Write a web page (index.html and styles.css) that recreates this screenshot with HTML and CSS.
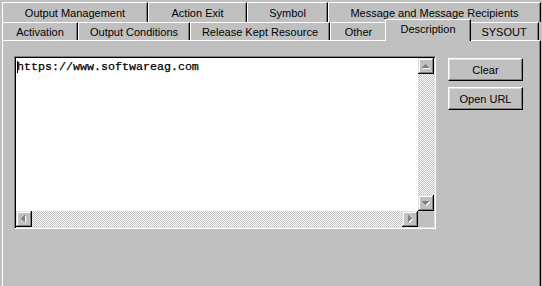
FILE: index.html
```html
<!DOCTYPE html>
<html>
<head>
<meta charset="utf-8">
<link rel="stylesheet" href="styles.css">
</head>
<body>
<svg class="defs" width="0" height="0" aria-hidden="true">
  <defs>
    <symbol id="bevel" viewBox="0 0 16 16">
      <rect x="0" y="0" width="16" height="16" fill="#c0c0c0"/>
      <rect x="0" y="0" width="15" height="1" fill="#dfdfdf"/>
      <rect x="0" y="0" width="1" height="15" fill="#dfdfdf"/>
      <rect x="1" y="1" width="13" height="1" fill="#fff"/>
      <rect x="1" y="1" width="1" height="13" fill="#fff"/>
      <rect x="1" y="14" width="14" height="1" fill="#808080"/>
      <rect x="14" y="1" width="1" height="14" fill="#808080"/>
      <rect x="0" y="15" width="16" height="1" fill="#000"/>
      <rect x="15" y="0" width="1" height="16" fill="#000"/>
    </symbol>
  </defs>
</svg>
<div class="dialog">
  <div class="tabrow row1">
    <div class="tab t-om">Output Management</div>
    <div class="tab t-ae">Action Exit</div>
    <div class="tab t-sym">Symbol</div>
    <div class="tab t-msg">Message and Message Recipients</div>
  </div>
  <div class="tabrow row2">
    <div class="tab t-act">Activation</div>
    <div class="tab t-oc">Output Conditions</div>
    <div class="tab t-rkr">Release Kept Resource</div>
    <div class="tab t-oth">Other</div>
    <div class="tab t-desc selected">Description</div>
    <div class="tab t-sys">SYSOUT</div>
  </div>
  <div class="panel">
    <div class="editbox">
      <div class="edit-text"><span class="caret"></span>https://www.softwareag.com</div>
      <div class="vscroll">
        <svg class="sbtn" width="16" height="16" viewBox="0 0 16 16" shape-rendering="crispEdges">
          <use href="#bevel"/>
          <g fill="#fff"><rect x="8" y="7" width="1" height="1"/><rect x="7" y="8" width="3" height="1"/><rect x="6" y="9" width="5" height="1"/><rect x="5" y="10" width="7" height="1"/></g>
          <g fill="#808080"><rect x="7" y="6" width="1" height="1"/><rect x="6" y="7" width="3" height="1"/><rect x="5" y="8" width="5" height="1"/><rect x="4" y="9" width="7" height="1"/></g>
        </svg>
        <div class="track"></div>
        <svg class="sbtn" width="16" height="16" viewBox="0 0 16 16" shape-rendering="crispEdges">
          <use href="#bevel"/>
          <g fill="#fff"><rect x="5" y="7" width="7" height="1"/><rect x="6" y="8" width="5" height="1"/><rect x="7" y="9" width="3" height="1"/><rect x="8" y="10" width="1" height="1"/></g>
          <g fill="#808080"><rect x="4" y="6" width="7" height="1"/><rect x="5" y="7" width="5" height="1"/><rect x="6" y="8" width="3" height="1"/><rect x="7" y="9" width="1" height="1"/></g>
        </svg>
      </div>
      <div class="hscroll">
        <svg class="sbtn" width="16" height="16" viewBox="0 0 16 16" shape-rendering="crispEdges">
          <use href="#bevel"/>
          <g fill="#fff"><rect x="6" y="8" width="1" height="1"/><rect x="7" y="7" width="1" height="3"/><rect x="8" y="6" width="1" height="5"/><rect x="9" y="5" width="1" height="7"/></g>
          <g fill="#808080"><rect x="5" y="7" width="1" height="1"/><rect x="6" y="6" width="1" height="3"/><rect x="7" y="5" width="1" height="5"/><rect x="8" y="4" width="1" height="7"/></g>
        </svg>
        <div class="track"></div>
        <svg class="sbtn" width="16" height="16" viewBox="0 0 16 16" shape-rendering="crispEdges">
          <use href="#bevel"/>
          <g fill="#fff"><rect x="7" y="5" width="1" height="7"/><rect x="8" y="6" width="1" height="5"/><rect x="9" y="7" width="1" height="3"/><rect x="10" y="8" width="1" height="1"/></g>
          <g fill="#808080"><rect x="6" y="4" width="1" height="7"/><rect x="7" y="5" width="1" height="5"/><rect x="8" y="6" width="1" height="3"/><rect x="9" y="7" width="1" height="1"/></g>
        </svg>
      </div>
      <div class="corner"></div>
    </div>
    <div class="buttons">
      <button class="btn">Clear</button>
      <button class="btn">Open URL</button>
    </div>
  </div>
</div>
</body>
</html>
```
FILE: styles.css
```css
html, body {
  margin: 0;
  background: #c0c0c0;
}
body {
  width: 542px;
  height: 286px;
  overflow: hidden;
  font-family: "Liberation Sans", Arial, sans-serif;
  font-size: 11px;
  color: #000;
}
.defs {
  position: absolute;
  width: 0;
  height: 0;
}
.dialog {
  box-sizing: border-box;
  width: 542px;
  height: 286px;
  padding: 2px 1px 0 2px;
  display: flex;
  flex-direction: column;
}
.tabrow {
  display: flex;
  align-items: flex-start;
  flex: none;
}
.row1 { height: 20px; }
.row2 { height: 18px; }
.tab {
  box-sizing: border-box;
  flex: none;
  border-top: 1px solid #fff;
  border-left: 1px solid #fff;
  border-right: 1px solid #000;
  box-shadow: inset -1px 0 #808080;
  background: #c0c0c0;
  text-align: center;
  white-space: nowrap;
  line-height: 12px;
}
.row1 .tab { height: 20px; padding-top: 4px; }
.row2 .tab { height: 18px; padding-top: 3px; }
.t-om { width: 146px; }
.t-ae { width: 99px; }
.t-sym { width: 81px; }
.t-msg { width: 213px; }
.t-act { width: 76px; }
.t-oc { width: 112px; }
.t-rkr { width: 140px; }
.t-oth { width: 57px; }
.t-desc { width: 82px; }
.t-sys { width: 70px; }
.row2 .tab.selected {
  position: relative;
  z-index: 1;
  width: 86px;
  height: 22px;
  margin: -3px -2px -1px -2px;
  padding-top: 3px;
}
.panel {
  flex: 1;
  box-sizing: border-box;
  display: flex;
  align-items: flex-start;
  gap: 12px;
  padding: 15px 0 0 11px;
  border-top: 1px solid #fff;
  border-left: 1px solid #fff;
  border-right: 1px solid #000;
  box-shadow: inset -1px 0 #808080;
}
.editbox {
  box-sizing: border-box;
  width: 422px;
  height: 173px;
  padding: 1px;
  border: 1px solid;
  border-color: #808080 #fff #fff #808080;
  box-shadow: inset 1px 1px #000, inset -1px -1px #dfdfdf;
  display: grid;
  grid-template-columns: 1fr 16px;
  grid-template-rows: 1fr 16px;
}
.edit-text {
  background: #fff;
  padding: 3px 0 0 1px;
  font-family: "Liberation Mono", "Courier New", monospace;
  font-size: 11.67px;
  line-height: 13px;
  white-space: nowrap;
  overflow: hidden;
  -webkit-text-stroke: 0.25px #000;
}
.caret {
  display: inline-block;
  width: 1px;
  height: 12px;
  background: #000;
  margin-right: -1px;
  vertical-align: -3px;
}
.vscroll {
  display: flex;
  flex-direction: column;
}
.hscroll {
  display: flex;
}
.sbtn {
  display: block;
  flex: none;
}
.track {
  flex: 1;
  background-color: #c0c0c0;
  background-image: url("data:image/svg+xml,%3Csvg xmlns='http://www.w3.org/2000/svg' width='2' height='2' shape-rendering='crispEdges'%3E%3Crect width='1' height='1' fill='%23fff'/%3E%3Crect x='1' y='1' width='1' height='1' fill='%23fff'/%3E%3C/svg%3E");
  background-size: 2px 2px;
}
.corner {
  background: #c0c0c0;
}
.buttons {
  display: flex;
  flex-direction: column;
  gap: 6px;
  margin-top: 2px;
}
.btn {
  box-sizing: border-box;
  width: 75px;
  height: 23px;
  padding: 0;
  border: 1px solid;
  border-color: #fff #000 #000 #fff;
  box-shadow: inset -1px -1px #808080, inset 1px 1px #dfdfdf;
  background: #c0c0c0;
  font-family: "Liberation Sans", Arial, sans-serif;
  font-size: 11px;
  color: #000;
  line-height: 12px;
}
```
